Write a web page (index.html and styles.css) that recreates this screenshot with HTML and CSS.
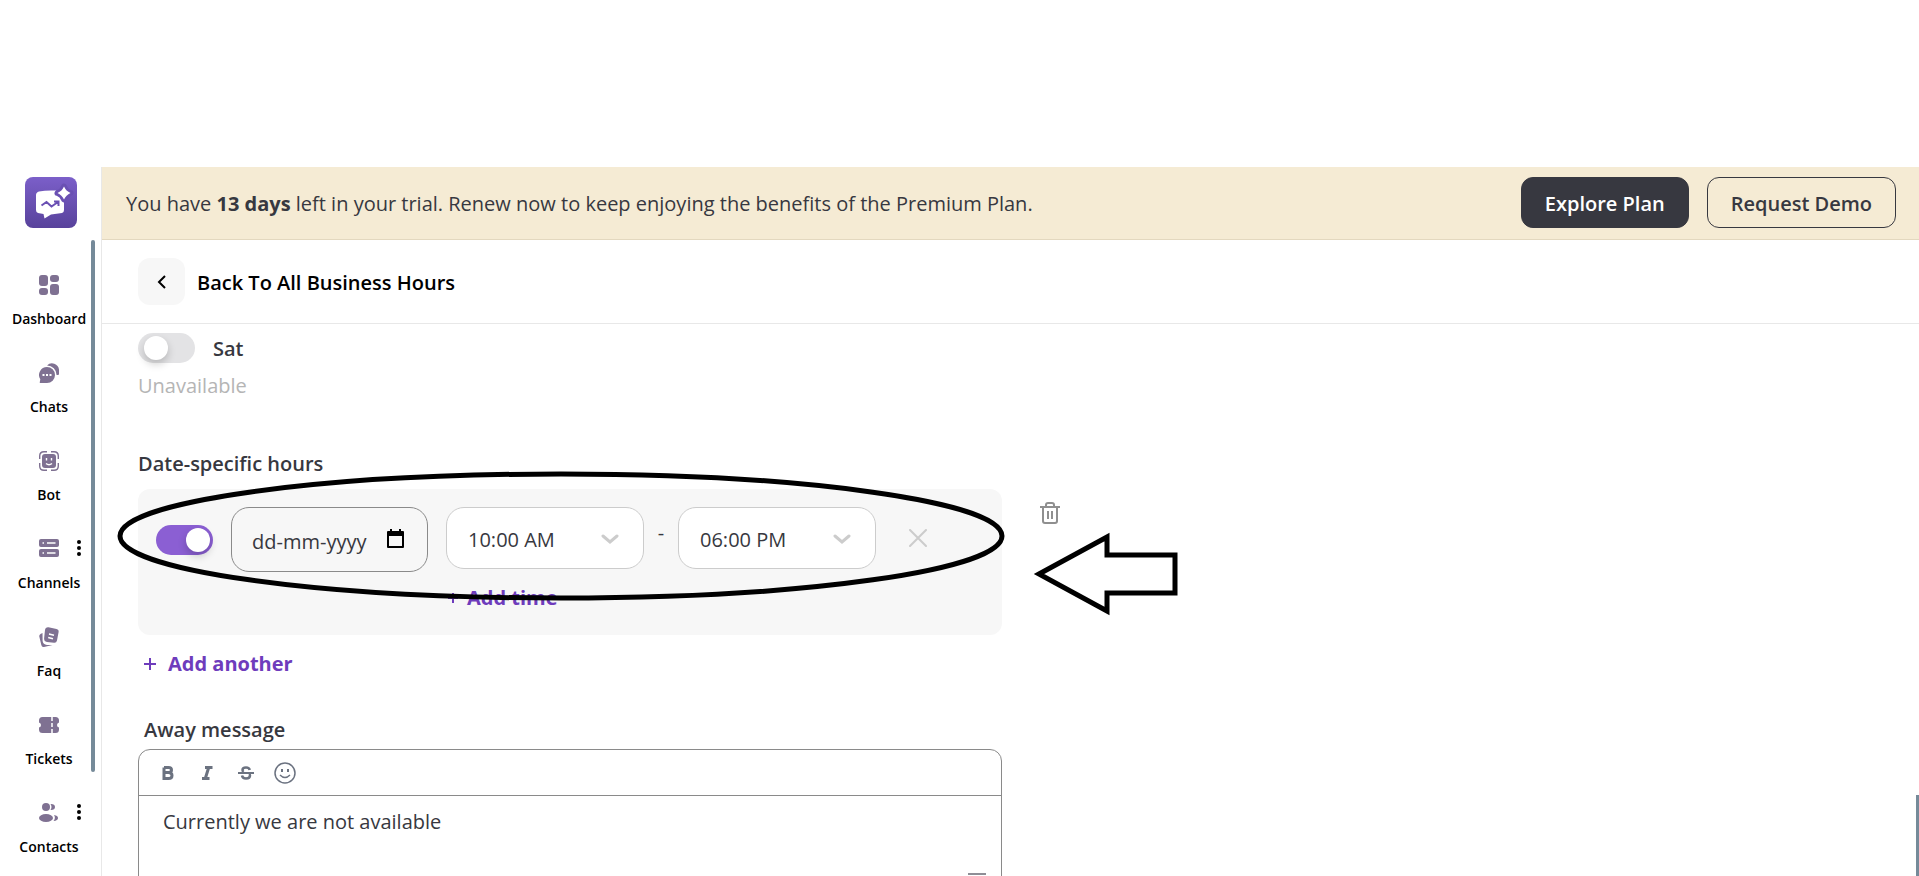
FILE: index.html
```html
<!DOCTYPE html>
<html lang="en">
<head>
  <meta charset="UTF-8">
  <meta name="viewport" content="width=device-width, initial-scale=1.0">
  <title>Business Hours</title>
  <link rel="stylesheet" href="styles.css">
</head>
<body>
  <div class="app">
    <!-- Sidebar -->
    <aside class="sidebar">
      <a class="logo" href="#" aria-label="Home">
        <svg width="52" height="51" viewBox="0 0 52 51">
          <defs>
            <linearGradient id="logoBg" x1="0" y1="0" x2="0" y2="1">
              <stop offset="0" stop-color="#7b5fc9"/>
              <stop offset="1" stop-color="#58429b"/>
            </linearGradient>
          </defs>
          <rect width="52" height="51" rx="8" fill="url(#logoBg)"/>
          <path d="M14 14.500Q21 13 31 13.500L39 22V33Q39 35.500 37 36L26 37.500L19.500 41.500L18.500 37L13 36Q11 35.500 11 33V18Q11 15.500 14 14.500Z" fill="#fff"/>
          <path d="M39 9.500Q40.500 14.500 45.500 16Q40.500 17.500 39 22.500Q37.500 17.500 32.500 16Q37.500 14.500 39 9.500Z" fill="#fff" stroke="#6a50b3" stroke-width="6" stroke-linejoin="round"/>
          <path d="M39 9.500Q41 14 45.500 16Q41 18 39 22.500Q37 18 32.500 16Q37 14 39 9.500Z" fill="#fff"/>
          <path d="M16.500 28.500L21.500 25L26.500 29.500L33 25M29 24.500H33.500V29" fill="none" stroke="#6a50b3" stroke-width="2"/>
        </svg>
      </a>
      <div class="sidebar-body">
        <nav class="menu">
          <a class="menu-item" href="#">
            <span class="menu-icon">
              <svg width="20" height="20" viewBox="0 0 20 20" fill="currentColor">
                <rect width="9" height="11" rx="3"/><rect x="11" width="9" height="7" rx="3"/>
                <rect y="13" width="9" height="7" rx="3"/><rect x="11" y="9" width="9" height="11" rx="3"/>
              </svg>
            </span>
            Dashboard
          </a>
          <a class="menu-item" href="#">
            <span class="menu-icon">
              <svg width="20" height="20" viewBox="0 0 20 20" fill="currentColor">
                <path d="M8 4A8 8 0 1 1 8 20H1.500Q.5 20 .8 19L1.300 16.300A8 8 0 0 1 8 4Z"/>
                <path d="M8 2.500A7 7 0 0 1 20 6.500V11Q20 12 19 12H17.600A9.500 9.500 0 0 0 8 2.500Z"/>
                <rect x="3.500" y="11" width="2" height="2" fill="#fff"/><rect x="7" y="11" width="2" height="2" fill="#fff"/><rect x="10.500" y="11" width="2" height="2" fill="#fff"/>
              </svg>
            </span>
            Chats
          </a>
          <a class="menu-item" href="#">
            <span class="menu-icon">
              <svg width="20" height="20" viewBox="0 0 20 20" fill="currentColor">
                <rect x="3" y="3" width="14" height="14" rx="3"/>
                <path d="M.7 8V5Q.7 .7 5 .7H8M12 .7H15Q19.300 .7 19.300 5V8M19.300 12V15Q19.300 19.300 15 19.300H12M8 19.300H5Q.7 19.300 .7 15V12" fill="none" stroke="currentColor" stroke-width="1.400"/>
                <path d="M7.500 7V9.500M12.500 7V9.500M7 12.500Q10 15 13 12.500" fill="none" stroke="#fff" stroke-width="1.400"/>
              </svg>
            </span>
            Bot
          </a>
          <a class="menu-item" href="#">
            <span class="menu-icon">
              <svg width="20" height="20" viewBox="0 0 20 20" fill="currentColor">
                <rect width="20" height="8" rx="2"/><rect y="10" width="20" height="8" rx="2"/>
                <path d="M3.500 4H5M8 4H16.500M3.500 14H5M8 14H16.500" stroke="#fff" stroke-width="1.500"/>
              </svg>
              <svg class="menu-dots" width="4" height="16" viewBox="0 0 4 16"><circle cx="2" cy="2" r="2"/><circle cx="2" cy="8" r="2"/><circle cx="2" cy="14" r="2"/></svg>
            </span>
            Channels
          </a>
          <a class="menu-item" href="#">
            <span class="menu-icon">
              <svg width="20" height="20" viewBox="0 0 20 20" fill="currentColor">
                <path d="M3.500 6L1.500 7Q0 8 .3 9.500L2.300 18Q3 20.300 5 20L13.500 18H8Q4 17.500 3.600 14Z"/>
                <path d="M9.500 .3L17.500 2Q20 2.600 19.600 5L18 13.500Q17.400 16 15 15.700L8 15Q5 14.500 5.100 11.500L6 3Q6.500 0 9.500 .3Z"/>
                <path d="M10 7L15 8.200M9.200 10.500L14 11.700" stroke="#fff" stroke-width="1.400"/>
              </svg>
            </span>
            Faq
          </a>
          <a class="menu-item" href="#">
            <span class="menu-icon">
              <svg width="20" height="20" viewBox="0 0 20 20" fill="currentColor">
                <path d="M3.500 2H16.500Q20 2 20 5.500V7.500Q18 8 18 10Q18 12 20 12.500V14.500Q20 18 16.500 18H3.500Q0 18 0 14.500V12.500Q2 12 2 10Q2 8 0 7.500V5.500Q0 2 3.500 2Z"/>
                <path d="M13 2V6M13 8V12M13 14V18" stroke="#fff" stroke-width="1.500"/>
              </svg>
            </span>
            Tickets
          </a>
          <a class="menu-item" href="#">
            <span class="menu-icon">
              <svg width="20" height="20" viewBox="0 0 20 20" fill="currentColor">
                <circle cx="7" cy="4" r="4"/><ellipse cx="7" cy="15" rx="7" ry="4"/>
                <path d="M11.500 1Q16 .8 16 4Q16 7.200 11.500 7Q13.500 4 11.500 1ZM15 12Q19 12.500 19 15Q19 17.500 14.500 18Q17 15 15 12Z"/>
              </svg>
              <svg class="menu-dots" width="4" height="16" viewBox="0 0 4 16"><circle cx="2" cy="2" r="2"/><circle cx="2" cy="8" r="2"/><circle cx="2" cy="14" r="2"/></svg>
            </span>
            Contacts
          </a>
        </nav>
        <div class="sidebar-thumb"></div>
      </div>
    </aside>

    <!-- Page -->
    <div class="page">
      <div class="trial-bar">
        <p class="trial-text">You have <b>13 days</b> left in your trial. Renew now to keep enjoying the benefits of the Premium Plan.</p>
        <button type="button" class="btn btn-dark">Explore Plan</button>
        <button type="button" class="btn btn-outline">Request Demo</button>
      </div>

      <header class="page-header">
        <button type="button" class="back-btn" aria-label="Back">
          <svg width="10" height="14" viewBox="0 0 10 14"><path d="M8 1L2 7L8 13" fill="none" stroke="#000" stroke-width="2"/></svg>
        </button>
        <h1>Back To All Business Hours</h1>
      </header>

      <main class="content">
        <div class="day-row">
          <input type="checkbox" class="toggle" id="satToggle">
          <label for="satToggle">Sat</label>
        </div>
        <p class="unavailable">Unavailable</p>

        <h2>Date-specific hours</h2>
        <div class="schedule">
          <div class="hours-card">
            <div class="hours-row">
              <input type="checkbox" class="toggle" aria-label="Enable date" checked>
              <div class="date-field">
                <input type="text" placeholder="dd-mm-yyyy" aria-label="Date">
                <button type="button" class="icon-btn" aria-label="Open calendar">
                  <svg width="17" height="19" viewBox="0 0 17 19"><path d="M1 3H16V18H1Z" fill="none" stroke="#000" stroke-width="2" stroke-linejoin="round"/><path d="M1 2H16V7H1ZM3 0H5V3H3ZM12 0H14V3H12Z"/></svg>
                </button>
              </div>
              <div class="time-field">
                <select aria-label="From"><option>10:00 AM</option></select>
                <svg class="chevron" width="18" height="10" viewBox="0 0 18 10"><path d="M2 2L9 8L16 2"/></svg>
              </div>
              <span class="dash">-</span>
              <div class="time-field">
                <select aria-label="To"><option>06:00 PM</option></select>
                <svg class="chevron" width="18" height="10" viewBox="0 0 18 10"><path d="M2 2L9 8L16 2"/></svg>
              </div>
              <button type="button" class="icon-btn remove-time" aria-label="Remove time">
                <svg width="18" height="18" viewBox="0 0 18 18"><path d="M1 1L17 17M17 1L1 17" stroke="#ccc" stroke-width="2" stroke-linecap="round"/></svg>
              </button>
            </div>
            <button type="button" class="add-btn add-time">
              <svg width="10" height="10" viewBox="0 0 10 10"><path d="M5 0V10M0 5H10" stroke="currentColor" stroke-width="2"/></svg>
              Add time
            </button>
          </div>
          <button type="button" class="icon-btn delete-date" aria-label="Delete date">
            <svg width="20" height="22" viewBox="0 0 20 22" fill="none" stroke="#8f8f8f" stroke-width="2"><path d="M0 5H20M3 5V19Q3 21 5 21H15Q17 21 17 19V5M6 5V3Q6 1 8 1H12Q14 1 14 3V5M8 9V17M12 9V17"/></svg>
          </button>
          <!-- hand-drawn marks over the form -->
          <svg class="marks" width="1064" height="146" viewBox="0 0 1064 146">
            <ellipse cx="423" cy="47" rx="441" ry="62"/>
            <path d="M901 85L969 48V66H1037V104H969V122Z"/>
          </svg>
        </div>
        <button type="button" class="add-btn add-date">
          <svg width="12" height="12" viewBox="0 0 12 12"><path d="M6 0V12M0 6H12" stroke="currentColor" stroke-width="2"/></svg>
          Add another
        </button>

        <label class="away-label" for="awayMessage">Away message</label>
        <div class="editor">
          <div class="toolbar">
            <button type="button" class="icon-btn" aria-label="Bold">
              <svg width="22" height="22" viewBox="0 0 22 22"><path d="M7 5.500H11.500Q14.500 5.500 14.500 8T11.500 10.500H7M11.500 10.500Q15 10.500 15 13.500T11.500 16.500H7V5.500" stroke-width="3"/></svg>
            </button>
            <button type="button" class="icon-btn" aria-label="Italic">
              <svg width="22" height="22" viewBox="0 0 22 22"><path d="M9 5.500H16.500M6 16.500H13.500M12.700 5.500L9.300 16.500" stroke-width="3"/></svg>
            </button>
            <button type="button" class="icon-btn" aria-label="Strikethrough">
              <svg width="22" height="22" viewBox="0 0 22 22"><path d="M14.700 8Q14.300 5.500 11 5.500Q7.500 5.500 7.500 8Q7.500 9 8.500 10M7 13.500Q7.500 16.500 11 16.500Q15 16.500 15 13.500Q15 12.500 14 12" stroke-width="2.500"/><path d="M3 11H19" stroke-width="2"/></svg>
            </button>
            <button type="button" class="icon-btn" aria-label="Emoji">
              <svg width="22" height="22" viewBox="0 0 22 22"><circle cx="11" cy="11" r="10" stroke-width="1.500"/><path d="M8 7V10M14 7V10" stroke-width="2"/><path d="M6 13Q11 18 16 13" stroke-width="1.500"/></svg>
            </button>
          </div>
          <textarea id="awayMessage">Currently we are not available</textarea>
          <svg class="editor-grip" width="18" height="8" viewBox="0 0 18 8"><path d="M0 1H18M0 6H18" stroke="#8e8e96" stroke-width="2"/></svg>
        </div>
      </main>
      <div class="page-thumb"></div>
    </div>
  </div>
</body>
</html>
```
FILE: styles.css
```css
/* Global Reset */
* {
  margin: 0;
  padding: 0;
  box-sizing: border-box;
}

body {
  font-family: "Segoe UI", "Open Sans", "Noto Sans", sans-serif;
  font-size: 20px;
  line-height: 28px;
  color: #373840;
  background: #fff;
  padding-top: 167px;
  height: 100vh;
  overflow: hidden;
}

button,
input,
select,
textarea {
  font: inherit;
  color: inherit;
  border: none;
  background: none;
}

button {
  cursor: pointer;
}

svg {
  display: block;
}

.app {
  display: flex;
  height: 100%;
}

/* Sidebar */
.sidebar {
  flex: 0 0 102px;
  border-right: 1px solid #e8e8e8;
}

.logo {
  display: flex;
  justify-content: center;
  padding-top: 10px;
  height: 73px;
}

.sidebar-body {
  display: flex;
  align-items: flex-start;
  padding-right: 6px;
}

.menu {
  flex: 1;
  display: flex;
  flex-direction: column;
  gap: 34px;
  padding: 35px 0 0 7px;
}

.menu-item {
  display: flex;
  flex-direction: column;
  align-items: center;
  gap: 14px;
  font-size: 14px;
  font-weight: 600;
  line-height: 20px;
  color: #000;
  text-decoration: none;
}

.menu-icon {
  display: grid;
  grid-template-columns: 1fr 20px 1fr;
  width: 100%;
  color: #7f7192;
}

.menu-icon svg:first-child {
  grid-column: 2;
}

.menu-dots {
  margin: 1px 0 0 18px;
  fill: #000;
}

.sidebar-thumb {
  width: 4px;
  height: 532px;
  border-radius: 2px;
  background: #758a99;
}

/* Page */
.page {
  flex: 1;
  min-width: 0;
  position: relative;
}

.trial-bar {
  display: flex;
  align-items: center;
  gap: 18px;
  height: 73px;
  padding: 0 23px 1px 24px;
  background: #f5ebd4;
  border-bottom: 1px solid #e3d8bf;
}

.trial-text {
  flex: 1;
  padding-top: 3px;
}

.btn {
  height: 51px;
  padding: 2px 23px 0;
  border: 1px solid #373840;
  border-radius: 12px;
  font-weight: 600;
}

.btn-dark {
  background: #373840;
  color: #fff;
}

.page-header {
  display: flex;
  align-items: center;
  gap: 12px;
  height: 84px;
  padding-left: 36px;
  border-bottom: 1px solid #e8e8e8;
}

.back-btn {
  display: flex;
  align-items: center;
  justify-content: center;
  width: 47px;
  height: 47px;
  border-radius: 12px;
  background: #f7f7f7;
}

h1 {
  padding-top: 2px;
  font-size: 20px;
  font-weight: 600;
  color: #000;
}

h2 {
  font-size: 20px;
  font-weight: 600;
}

.content {
  padding: 9px 36px 0;
}

.day-row {
  display: flex;
  align-items: center;
  gap: 18px;
  font-weight: 600;
}

.day-row label {
  padding-top: 2px;
}

/* Toggle */
.toggle {
  appearance: none;
  display: flex;
  align-items: center;
  width: 57px;
  height: 30px;
  padding: 0 6px;
  border-radius: 15px;
  background: #e3e3e5;
  cursor: pointer;
}

.toggle::before {
  content: "";
  width: 24px;
  height: 24px;
  border-radius: 50%;
  background: #fff;
  box-shadow: 0 4px 8px rgba(0, 0, 0, 0.2);
}

.toggle:checked {
  justify-content: flex-end;
  padding: 0 3px;
  background: #8b5fd3;
}

.unavailable {
  margin: 9px 0 50px;
  color: #b5b5b5;
}

/* Date specific hours */
.schedule {
  display: flex;
  align-items: flex-start;
  gap: 38px;
  margin-top: 11px;
  position: relative;
}

.hours-card {
  width: 864px;
  height: 146px;
  padding: 18px;
  border-radius: 12px;
  background: #f7f7f7;
}

.hours-row {
  display: flex;
  align-items: flex-start;
}

.hours-row .toggle {
  margin: 18px 18px 0 0;
}

.date-field {
  display: flex;
  align-items: center;
  width: 197px;
  height: 65px;
  margin-right: 18px;
  padding: 4px 23px 0 20px;
  border: 1px solid #8a8a8a;
  border-radius: 18px;
}

.date-field input {
  flex: 1;
  min-width: 0;
}

.date-field input::placeholder {
  color: #373840;
}

.date-field .icon-btn {
  padding-bottom: 6px;
}

.time-field {
  position: relative;
}

.time-field select {
  appearance: none;
  width: 198px;
  height: 62px;
  padding: 4px 21px 0;
  border: 1px solid #ccc;
  border-radius: 18px;
  background: #fff;
}

.chevron {
  position: absolute;
  top: 27px;
  right: 25px;
  fill: none;
  stroke: #ccc;
  stroke-width: 3;
  stroke-linecap: round;
  pointer-events: none;
}

.dash {
  width: 34px;
  padding-top: 12px;
  text-align: center;
}

.remove-time {
  margin: 22px 0 0 33px;
}

.delete-date {
  margin-top: 13px;
}

.add-btn {
  display: flex;
  align-items: center;
  font-weight: 700;
  color: #6e3cbc;
}

.add-time {
  gap: 9px;
  margin: 12px 0 0 292px;
}

.add-date {
  gap: 12px;
  margin: 15px 0 0 6px;
}

.marks {
  position: absolute;
  top: 0;
  left: 0;
  overflow: visible;
  fill: none;
  stroke: #000;
  stroke-width: 5;
  pointer-events: none;
}

/* Away message editor */
.away-label {
  display: block;
  margin: 38px 0 5px 6px;
  font-weight: 600;
}

.editor {
  display: flex;
  flex-direction: column;
  width: 864px;
  border: 1px solid #8a8a8a;
  border-radius: 12px;
}

.toolbar {
  display: flex;
  align-items: center;
  gap: 17px;
  height: 46px;
  padding-left: 18px;
  border-bottom: 1px solid #8a8a8a;
}

.toolbar svg {
  fill: none;
  stroke: #6b7280;
}

.editor textarea {
  height: 77px;
  padding: 12px 24px;
  resize: none;
}

.editor-grip {
  align-self: flex-end;
  margin: 0 15px 12px 0;
}

/* Scroll thumb of the page */
.page-thumb {
  position: absolute;
  right: 0;
  bottom: 0;
  width: 3px;
  height: 81px;
  background: #758a99;
}
```
